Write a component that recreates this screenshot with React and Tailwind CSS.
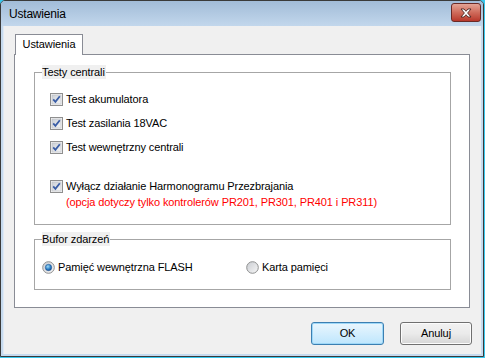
import React from 'react';

const FONT = { fontFamily: '"Liberation Sans", Arial, sans-serif' };

function CheckBox() {
    return (
        <svg width="13" height="13" viewBox="0 0 13 13" className="shrink-0">
            <defs>
                <linearGradient id="cbg" x1="0" y1="0" x2="1" y2="1">
                    <stop offset="0" stopColor="#cbcfd5" />
                    <stop offset="1" stopColor="#f6f6f6" />
                </linearGradient>
            </defs>
            <rect x="0.5" y="0.5" width="12" height="12" fill="#f4f4f4" stroke="#8f8f8f" />
            <rect x="2" y="2" width="9" height="9" fill="url(#cbg)" stroke="#b9bdc4" strokeWidth="0.6" />
            <path d="M3.2 6.4 L5.4 8.8 L9.8 3.2" fill="none" stroke="#3a5da6" strokeWidth="1.8" />
        </svg>
    );
}

function Radio({ checked }) {
    return (
        <svg width="13" height="13" viewBox="0 0 13 13" className="shrink-0">
            <defs>
                <radialGradient id="rdot" cx="0.4" cy="0.35" r="0.7">
                    <stop offset="0" stopColor="#9fdcf8" />
                    <stop offset="0.6" stopColor="#2b7fc6" />
                    <stop offset="1" stopColor="#10478a" />
                </radialGradient>
                <linearGradient id="rbg" x1="0" y1="0" x2="1" y2="1">
                    <stop offset="0" stopColor="#c9ccd1" />
                    <stop offset="1" stopColor="#f7f7f7" />
                </linearGradient>
            </defs>
            <circle cx="6.5" cy="6.5" r="5.8" fill="url(#rbg)" stroke="#8e8f8f" />
            {checked && <circle cx="6.5" cy="6.5" r="3.2" fill="url(#rdot)" stroke="#1e4f8e" strokeWidth="0.5" />}
        </svg>
    );
}

export default function App() {
    return (
        <div className="w-[485px] h-[358px] bg-[#38c8ef] text-[11px] tracking-[-0.1px] text-black" style={FONT}>
            <div className="w-[484px] h-[357px] border border-[#3a3a3a] rounded-tl-[5px] rounded-tr-[5px] bg-[#c6daee] flex flex-col overflow-hidden">
                {/* title bar */}
                <div className="h-[25px] shrink-0 flex items-center justify-between pl-[8px] pr-[2px] bg-gradient-to-b from-[#a2bcd8] to-[#c2d7ec]">
                    <span className="text-[12px] tracking-[-0.2px] mt-[1px]">Ustawienia</span>
                    <div className="w-[30px] h-[19px] mt-[-2px] rounded-[3px] border border-[#6a2a26] bg-gradient-to-b from-[#e3a496] via-[#cf6b5b] to-[#b8372b] flex items-center justify-center">
                        <svg width="14" height="10" viewBox="0 0 14 10">
                            <path d="M2 1 L5 1 L7 3.3 L9 1 L12 1 L8.6 5 L12 9 L9 9 L7 6.7 L5 9 L2 9 L5.4 5 Z" fill="#ffffff" stroke="#4a2522" strokeWidth="0.9" />
                        </svg>
                    </div>
                </div>
                {/* client area */}
                <div className="flex-1 mx-[2px] mb-[2px] bg-[#f0f0f0] border-l border-[#dfe9f5] pl-[10px] pt-[8px] flex flex-col">
                    <div className="flex">
                        <div className="ml-[1px] w-[68px] h-[21px] bg-white border border-b-0 border-[#898c95] flex items-center justify-center relative z-10 -mb-[1px] pb-[1px]">
                            Ustawienia
                        </div>
                    </div>
                    <div className="w-[456px] h-[254px] bg-white border border-[#898c95] pl-[19px] pt-[17px] flex flex-col">
                        {/* Testy centrali */}
                        <div className="relative w-[417px] h-[153px] border border-[#a6a6a6] pl-[15px] pt-[20px] flex flex-col">
                            <span className="absolute left-[7px] top-[-8px] bg-[#f0f0f0] pr-[1px] leading-[14px]">Testy centrali</span>
                            <div className="flex items-center gap-[3px] h-[13px]">
                                <CheckBox />
                                <span>Test akumulatora</span>
                            </div>
                            <div className="flex items-center gap-[3px] h-[13px] mt-[11px]">
                                <CheckBox />
                                <span>Test zasilania 18VAC</span>
                            </div>
                            <div className="flex items-center gap-[3px] h-[13px] mt-[11px]">
                                <CheckBox />
                                <span>Test wewnętrzny centrali</span>
                            </div>
                            <div className="flex items-center gap-[3px] h-[13px] mt-[26px]">
                                <CheckBox />
                                <span>Wyłącz działanie Harmonogramu Przezbrajania</span>
                            </div>
                            <div className="pl-[16px] mt-[2px] leading-[15px] text-[#ff0000]">
                                (opcja dotyczy tylko kontrolerów PR201, PR301, PR401 i PR311)
                            </div>
                        </div>
                        {/* Bufor zdarzeń */}
                        <div className="relative w-[417px] h-[51px] mt-[14px] border border-[#a6a6a6] pl-[7px] pt-[21px] flex items-start">
                            <span className="absolute left-[7px] top-[-8px] bg-[#f0f0f0] pr-[1px] leading-[14px]">Bufor zdarzeń</span>
                            <div className="flex items-center gap-[3px] h-[13px] w-[204px]">
                                <Radio checked />
                                <span>Pamięć wewnętrzna FLASH</span>
                            </div>
                            <div className="flex items-center gap-[3px] h-[13px]">
                                <Radio />
                                <span>Karta pamięci</span>
                            </div>
                        </div>
                    </div>
                    <div className="flex gap-[16px] ml-[297px] mt-[14px]">
                        <button className="w-[73px] h-[23px] rounded-[3px] border border-[#3c7fb1] bg-gradient-to-b from-[#eaf6fd] to-[#bee6fd] shadow-[inset_0_0_0_1px_#9ed8f8] flex items-center justify-center">
                            OK
                        </button>
                        <button className="w-[72px] h-[23px] rounded-[3px] border border-[#707070] bg-gradient-to-b from-[#f2f2f2] via-[#ebebeb] to-[#d6d6d6] shadow-[inset_0_0_0_1px_#fcfcfc] flex items-center justify-center">
                            Anuluj
                        </button>
                    </div>
                </div>
            </div>
        </div>
    );
}
